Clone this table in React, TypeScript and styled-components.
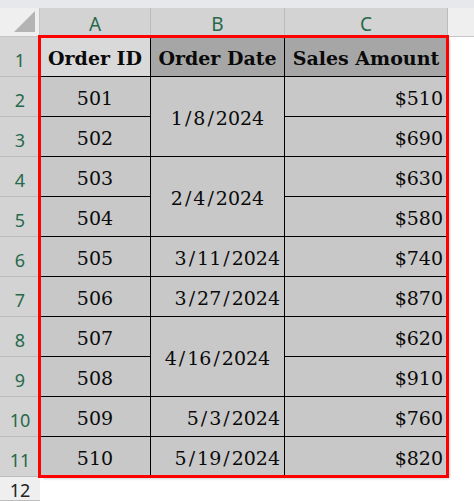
import React from "react";
import styled, { createGlobalStyle } from "styled-components";

const Global = createGlobalStyle`
  html, body { margin: 0; padding: 0; background: #ffffff; }
  body { width: 474px; height: 501px; overflow: hidden; }
  * { box-sizing: border-box; }
`;

const Sheet = styled.div`
  display: flex;
  flex-direction: column;
  width: 474px;
  height: 501px;
  overflow: hidden;
  background: #ffffff;
`;

const TopStrip = styled.div`
  flex: none;
  height: 8px;
  background: #e6e8eb;
`;

const HeaderRow = styled.div`
  flex: none;
  display: flex;
  height: 29px;
`;

const Corner = styled.div`
  width: 40px;
  height: 29px;
  background: #efefef;
  border-right: 1px solid #c6c6c6;
  border-bottom: 1px solid #c6c6c6;
  display: flex;
  align-items: flex-end;
  justify-content: flex-end;
  padding: 0 3px 3px 0;
`;

const ColHeader = styled.div<{ $w: number }>`
  width: ${(p) => p.$w}px;
  height: 29px;
  background: #d3d3d3;
  border-right: 1px solid #bcbcbc;
  border-bottom: 1px solid #a8a8a8;
  display: flex;
  align-items: center;
  justify-content: center;
  padding-top: 3px;
  font-family: "Noto Sans", "Open Sans", sans-serif;
  font-size: 19px;
  font-weight: 400;
  color: #27694b;
`;

const HeaderFiller = styled.div`
  flex: 1;
  height: 29px;
  background: #efefef;
  border-bottom: 1px solid #c6c6c6;
`;

const Body = styled.div`
  flex: none;
  display: flex;
  align-items: flex-start;
`;

const RowHeaders = styled.div`
  display: flex;
  flex-direction: column;
  width: 40px;
`;

const RowHeader = styled.div<{ $sel: boolean; $h: number }>`
  height: ${(p) => p.$h}px;
  background: ${(p) => (p.$sel ? "#d3d3d3" : "#efefef")};
  border-bottom: 1px solid #bdbdbd;
  display: flex;
  align-items: center;
  justify-content: center;
  padding-top: ${(p) => (p.$sel ? 7 : 2)}px;
  font-family: "Noto Sans", "Open Sans", sans-serif;
  font-size: 18px;
  font-weight: 400;
  color: ${(p) => (p.$sel ? "#27694b" : "#222222")};
`;

const DataGrid = styled.div`
  position: relative;
  z-index: 1;
  display: grid;
  grid-template-columns: 110px 133px 162px;
  grid-auto-rows: 39px;
  gap: 1px;
  background: #000000;
  outline: 3px solid #ff0000;
  outline-offset: -1px;
  box-shadow: 3px 3px 2px rgba(0, 0, 0, 0.18);
`;

type Align = "center" | "right";

const Cell = styled.div<{ $align: Align; $bg: string; $span?: number; $bold?: boolean }>`
  grid-row: span ${(p) => p.$span ?? 1};
  background: ${(p) => p.$bg};
  display: flex;
  align-items: center;
  justify-content: ${(p) => (p.$align === "center" ? "center" : "flex-end")};
  padding: 2px 4px 0 4px;
  font-family: "DejaVu Serif", "Liberation Serif", serif;
  font-size: 19px;
  font-weight: ${(p) => (p.$bold ? 700 : 400)};
  color: #0a0a0a;
  white-space: nowrap;
  overflow: hidden;
`;

const Slash = styled.span`
  margin: 0 2px;
`;

const BODY_BG = "#c8c8c8";

const rows: { id: number; date?: string; span?: number; amount: string }[] = [
  { id: 501, date: "1/8/2024", span: 2, amount: "$510" },
  { id: 502, amount: "$690" },
  { id: 503, date: "2/4/2024", span: 2, amount: "$630" },
  { id: 504, amount: "$580" },
  { id: 505, date: "3/11/2024", amount: "$740" },
  { id: 506, date: "3/27/2024", amount: "$870" },
  { id: 507, date: "4/16/2024", span: 2, amount: "$620" },
  { id: 508, amount: "$910" },
  { id: 509, date: "5/3/2024", amount: "$760" },
  { id: 510, date: "5/19/2024", amount: "$820" },
];

function DateText({ value }: { value: string }) {
  const parts = value.split("/");
  return (
    <span>
      {parts.map((p, i) => (
        <React.Fragment key={i}>
          {i > 0 && <Slash>/</Slash>}
          {p}
        </React.Fragment>
      ))}
    </span>
  );
}

export default function App() {
  return (
    <>
      <Global />
      <Sheet>
        <TopStrip />
        <HeaderRow>
          <Corner>
            <svg width="22" height="22" viewBox="0 0 22 22">
              <polygon points="21,0 21,21 0,21" fill="#b4b4b4" />
            </svg>
          </Corner>
          <ColHeader $w={111}>A</ColHeader>
          <ColHeader $w={134}>B</ColHeader>
          <ColHeader $w={163}>C</ColHeader>
          <HeaderFiller />
        </HeaderRow>
        <Body>
          <RowHeaders>
            {Array.from({ length: 12 }, (_, i) => (
              <RowHeader key={i} $sel={i < 11} $h={i < 11 ? 40 : 24}>
                {i + 1}
              </RowHeader>
            ))}
          </RowHeaders>
          <DataGrid>
            <Cell $align="center" $bg="#d9d9d9" $bold>
              Order ID
            </Cell>
            <Cell $align="center" $bg="#a6a6a6" $bold>
              Order Date
            </Cell>
            <Cell $align="center" $bg="#a6a6a6" $bold>
              Sales Amount
            </Cell>
            {rows.map((r) => (
              <React.Fragment key={r.id}>
                <Cell $align="center" $bg={BODY_BG}>
                  {r.id}
                </Cell>
                {r.date && (
                  <Cell $align={r.span ? "center" : "right"} $bg={BODY_BG} $span={r.span}>
                    <DateText value={r.date} />
                  </Cell>
                )}
                <Cell $align="right" $bg={BODY_BG}>
                  {r.amount}
                </Cell>
              </React.Fragment>
            ))}
          </DataGrid>
        </Body>
      </Sheet>
    </>
  );
}
